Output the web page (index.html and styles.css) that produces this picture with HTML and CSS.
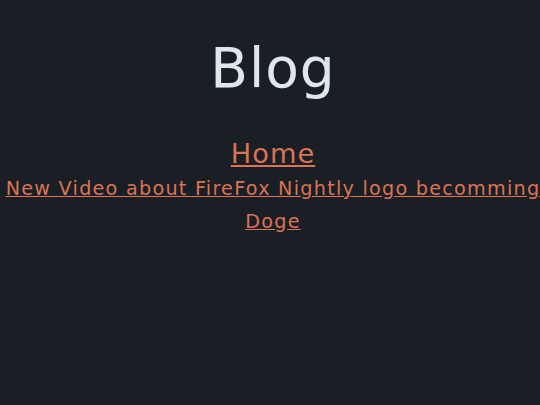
FILE: index.html
```html
<!DOCTYPE html>
<html>
<head>
<meta charset="utf-8">
<link rel="stylesheet" href="styles.css">
</head>
<body>
<header class="site-header">
  <h1 class="title">Blog</h1>
</header>
<nav class="nav">
  <a class="nav-home" href="#">Home</a>
  <ul class="posts">
    <li><a class="post-link" href="#">New Video about FireFox Nightly logo becomming Doge</a></li>
  </ul>
</nav>
</body>
</html>
```
FILE: styles.css
```css
html, body {
  margin: 0;
  padding: 0;
  background: #1a1e25;
  height: 100%;
}
body {
  font-family: "DejaVu Sans", sans-serif;
  text-align: center;
  letter-spacing: 1px;
  padding-left: 6px;
  box-sizing: border-box;
  overflow: hidden;
}
.site-header {
  padding-top: 36px;
}
.title {
  margin: 0;
  font-size: 55px;
  font-weight: normal;
  color: #dfe6ee;
  line-height: 64px;
}
.nav {
  margin-top: 36px;
}
.nav-home {
  display: inline-block;
  font-size: 27.2px;
  color: #dc7353;
  line-height: 36px;
}
.posts {
  list-style: none;
  margin: 1px -12px 0;
  padding: 0;
}
.post-link {
  font-size: 19.2px;
  letter-spacing: 1.25px;
  line-height: 32.6px;
  color: #dc7353;
}
```
